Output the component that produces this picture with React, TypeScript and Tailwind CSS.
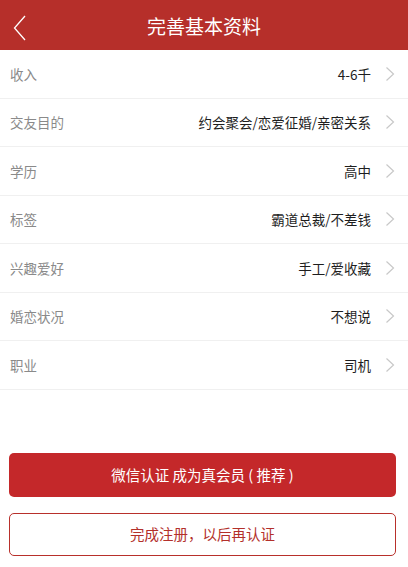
import React from "react";

const rows: [string, string][] = [
  ["收入", "4-6千"],
  ["交友目的", "约会聚会/恋爱征婚/亲密关系"],
  ["学历", "高中"],
  ["标签", "霸道总裁/不差钱"],
  ["兴趣爱好", "手工/爱收藏"],
  ["婚恋状况", "不想说"],
  ["职业", "司机"],
];

function Chevron() {
  return (
    <svg width="10" height="16" viewBox="0 0 10 16" className="shrink-0">
      <path d="M1.5 1.5 L8.5 8 L1.5 14.5" fill="none" stroke="#c8c8c8" strokeWidth="1.2" />
    </svg>
  );
}

export default function App() {
  return (
    <div
      className="w-[408px] h-[567px] bg-white flex flex-col overflow-hidden"
      style={{ fontFamily: '"Noto Sans CJK SC", "Noto Sans", sans-serif' }}
    >
      <div className="h-[50px] bg-[#b62f2a] flex items-center relative shrink-0">
        <svg width="14" height="26" viewBox="0 0 14 26" className="absolute left-[13px] top-[15px]">
          <path d="M12 1 L1.5 13 L12 25" fill="none" stroke="#ffffff" strokeWidth="1.3" />
        </svg>
        <div className="flex-1 text-center text-white text-[19px] leading-none">完善基本资料</div>
      </div>
      <div className="flex flex-col">
        {rows.map(([k, v]) => (
          <div
            key={k}
            className="h-[48.5px] border-b border-[#f0f0f0] flex items-center pl-[10px] pr-[13px]"
          >
            <div className="text-[13.5px] text-[#8a8a8a] flex-1">{k}</div>
            <div className="text-[13.5px] text-[#1e1e1e] mr-[14px]">{v}</div>
            <Chevron />
          </div>
        ))}
      </div>
      <div className="mt-[63px] pl-[9px] pr-[12px] flex flex-col gap-[16px]">
        <div className="h-[44px] rounded-[5px] bg-[#c4282a] flex items-center justify-center text-white text-[14.5px]">
          微信认证 成为真会员 ( 推荐 )
        </div>
        <div className="h-[43px] rounded-[5px] border border-[#b8302b] flex items-center justify-center text-[#b3302b] text-[14.5px]">
          完成注册，以后再认证
        </div>
      </div>
    </div>
  );
}
